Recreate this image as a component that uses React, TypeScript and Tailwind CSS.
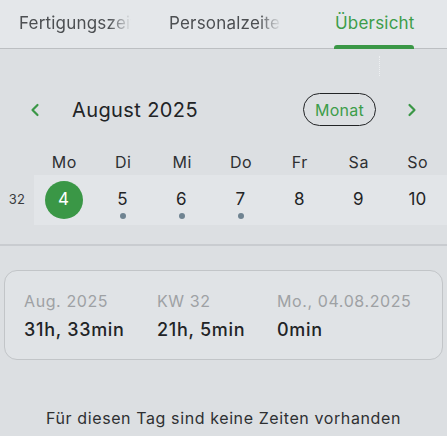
import React from "react";
import { ChevronLeft, ChevronRight } from "lucide-react";

const days = [
  { d: "Mo", n: "4", sel: true, dot: false },
  { d: "Di", n: "5", sel: false, dot: true },
  { d: "Mi", n: "6", sel: false, dot: true },
  { d: "Do", n: "7", sel: false, dot: true },
  { d: "Fr", n: "8", sel: false, dot: false },
  { d: "Sa", n: "9", sel: false, dot: false },
  { d: "So", n: "10", sel: false, dot: false },
];

export default function App() {
  return (
    <div
      className="relative w-[447px] h-[436px] overflow-hidden bg-[#dcdfe2] text-[#222426]"
      style={{ fontFamily: "Inter, 'Noto Sans', sans-serif" }}
    >
      {/* Tabs */}
      <div className="flex h-[49px] bg-[#e4e7ea] border-b border-[#bcbfc2]">
        <div className="w-[150px] pl-[19px] flex items-center">
          <span className="block w-[112px] overflow-hidden whitespace-nowrap text-[17px] text-[#4c4f52] tracking-[0.2px] [mask-image:linear-gradient(to_right,black_80%,transparent)]">
            Fertigungszeiten
          </span>
        </div>
        <div className="w-[150px] pl-[19px] flex items-center">
          <span className="block w-[112px] overflow-hidden whitespace-nowrap text-[17px] text-[#4c4f52] tracking-[0.2px] [mask-image:linear-gradient(to_right,black_80%,transparent)]">
            Personalzeiten
          </span>
        </div>
        <div className="relative w-[147px] flex items-center">
          <span className="ml-[35px] text-[17px] text-[#3d9d4a] tracking-[0.2px]">Übersicht</span>
          <div className="absolute left-[34px] bottom-[-1px] w-[80px] h-[4px] rounded-t-[3px] bg-[#3a9746]" />
        </div>
      </div>

      {/* faint scroll indicator */}
      <div className="absolute left-[379px] top-[56px] w-[1px] h-[20px] border-l border-dotted border-[#eef0f2]" />

      {/* Month header */}
      <div className="mt-[44px] h-[33px] flex items-center">
        <div className="w-[72px] flex items-center pl-[25px]">
          <ChevronLeft size={20} strokeWidth={2.6} className="text-[#3a9746]" />
        </div>
        <div className="text-[20px] tracking-[0.4px] text-[#222426]">August 2025</div>
        <div className="ml-auto w-[73px] h-[33px] rounded-full border-[1.5px] border-[#222426] flex items-center justify-center text-[16px] tracking-[0.3px] text-[#3d9d4a]">
          Monat
        </div>
        <div className="w-[71px] flex items-center justify-center">
          <ChevronRight size={20} strokeWidth={2.6} className="text-[#3a9746]" />
        </div>
      </div>

      {/* Weekdays */}
      <div className="mt-[23px] h-[26px] flex items-center">
        <div className="w-[35px]" />
        {days.map((x) => (
          <div key={x.d} className="w-[59px] text-center text-[16px] tracking-[0.5px] text-[#2e3032]">
            {x.d}
          </div>
        ))}
      </div>

      {/* Week row */}
      <div className="h-[50px] flex">
        <div className="w-[35px] flex items-center justify-center text-[13px] tracking-[0.3px] text-[#3a3c3e]">32</div>
        <div className="flex-1 flex bg-[#e2e5e8]">
          {days.map((x) => (
            <div key={x.n} className="w-[59px] relative flex items-center justify-center">
              {x.sel ? (
                <div className="w-[38px] h-[38px] rounded-full bg-[#3a9746] flex items-center justify-center text-[17px] text-white">
                  {x.n}
                </div>
              ) : (
                <span className="text-[17px] tracking-[0.3px] text-[#222426]">{x.n}</span>
              )}
              {x.dot && (
                <div className="absolute left-1/2 top-[38px] -translate-x-1/2 w-[6px] h-[6px] rounded-full bg-[#6f8391]" />
              )}
            </div>
          ))}
        </div>
      </div>

      {/* Divider */}
      <div className="mt-[19px] h-[2px] bg-[#c9ccd0]" />

      {/* Summary card */}
      <div className="mt-[24px] mx-[4px] h-[90px] rounded-[13px] border border-[#c2c5c8] bg-[#e0e3e6] pl-[19px] pt-[20px] flex">
        <div className="w-[133px]">
          <div className="text-[16px] leading-[20px] text-[#9ea1a4] tracking-[0.6px]">Aug. 2025</div>
          <div className="mt-[7px] text-[18px] leading-[24px] text-[#222426] font-medium tracking-[0.7px]">31h, 33min</div>
        </div>
        <div className="w-[120px]">
          <div className="text-[16px] leading-[20px] text-[#9ea1a4] tracking-[0.6px]">KW 32</div>
          <div className="mt-[7px] text-[18px] leading-[24px] text-[#222426] font-medium tracking-[0.7px]">21h, 5min</div>
        </div>
        <div>
          <div className="text-[16px] leading-[20px] text-[#9ea1a4] tracking-[0.6px]">Mo., 04.08.2025</div>
          <div className="mt-[7px] text-[18px] leading-[24px] text-[#222426] font-medium tracking-[0.7px]">0min</div>
        </div>
      </div>

      {/* Empty text */}
      <div className="mt-[47px] text-center text-[16px] leading-[22px] text-[#2e3032] tracking-[0.6px]">
        Für diesen Tag sind keine Zeiten vorhanden
      </div>
    </div>
  );
}
